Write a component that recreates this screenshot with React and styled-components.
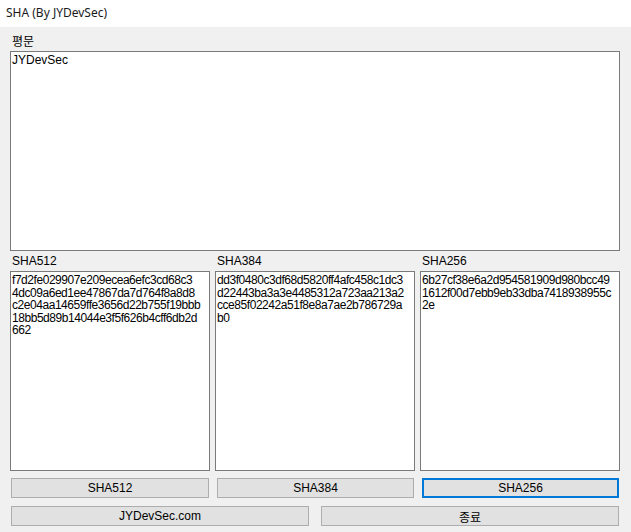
import React from 'react'
import styled, {createGlobalStyle} from 'styled-components'

const GlobalStyle = createGlobalStyle`
  body {
    margin: 0;
    background: #ffffff;
  }
`

const uiFont = `"Liberation Sans", "Noto Sans CJK KR", sans-serif`

const Window = styled.div`
  width: 631px;
  height: 532px;
  display: flex;
  flex-direction: column;
  font-family: ${uiFont};
  font-size: 12px;
  color: #000;
`

const TitleBar = styled.div`
  height: 27px;
  flex: none;
  background: #ffffff;
  display: flex;
  align-items: center;
  padding-left: 6px;
  padding-bottom: 3px;
  box-sizing: border-box;
  font-family: "Noto Sans", "Noto Sans CJK KR", sans-serif;
  font-size: 12px;
  color: #1a1a1a;
`

const Body = styled.div`
  flex: 1;
  background: #f0f0f0;
  padding: 8px 11px 0 10px;
  display: flex;
  flex-direction: column;
`

const Label = styled.div`
  height: ${p => p.$h || 16}px;
  line-height: 14px;
  padding-left: 2px;
  display: flex;
  align-items: ${p => p.$align || 'flex-start'};
`

const TextBox = styled.div`
  height: 200px;
  box-sizing: border-box;
  background: #ffffff;
  border: 1px solid #7a7a7a;
  padding: 2px 1px;
  white-space: pre;
  line-height: 12.5px;
  letter-spacing: ${p => p.$tight ? '-0.45px' : '0'};
  overflow: hidden;
`

const HashGrid = styled.div`
  display: grid;
  grid-template-columns: repeat(3, 200px);
  column-gap: 5px;
`

const HashColumn = styled.div`
  display: flex;
  flex-direction: column;
`

const ButtonRow = styled.div`
  display: grid;
  grid-template-columns: ${p => p.$cols};
  column-gap: ${p => p.$gap}px;
  margin-top: ${p => p.$top}px;
`

const Button = styled.button`
  height: 20px;
  margin: 0 1px 0 ${p => p.$first ? 1 : 2}px;
  box-sizing: border-box;
  background: #e1e1e1;
  border: ${p => p.$focused ? '2px solid #0078d7' : '1px solid #adadad'};
  border-radius: 0;
  font-family: ${uiFont};
  font-size: 12px;
  color: #000;
  padding: 0;
  cursor: default;
`

const hashes = [
  {
    name: 'SHA512',
    lines: [
      'f7d2fe029907e209ecea6efc3cd68c3',
      '4dc09a6ed1ee47867da7d764f8a8d8',
      'c2e04aa14659ffe3656d22b755f19bbb',
      '18bb5d89b14044e3f5f626b4cff6db2d',
      '662'
    ]
  },
  {
    name: 'SHA384',
    lines: [
      'dd3f0480c3df68d5820ff4afc458c1dc3',
      'd22443ba3a3e4485312a723aa213a2',
      'cce85f02242a51f8e8a7ae2b786729a',
      'b0'
    ]
  },
  {
    name: 'SHA256',
    lines: [
      '6b27cf38e6a2d954581909d980bcc49',
      '1612f00d7ebb9eb33dba7418938955c',
      '2e'
    ]
  }
]

export default function App () {
  return (
    <Window>
      <GlobalStyle />
      <TitleBar>SHA (By JYDevSec)</TitleBar>
      <Body>
        <Label>평문</Label>
        <TextBox>JYDevSec</TextBox>
        <HashGrid>
          {hashes.map(h => (
            <HashColumn key={h.name}>
              <Label $h={20} $align='center'>{h.name}</Label>
              <TextBox $tight>{h.lines.join('\n')}</TextBox>
            </HashColumn>
          ))}
        </HashGrid>
        <ButtonRow $cols='repeat(3, 200px)' $gap={5} $top={7}>
          <Button $first>SHA512</Button>
          <Button>SHA384</Button>
          <Button $focused>SHA256</Button>
        </ButtonRow>
        <ButtonRow $cols='repeat(2, 300px)' $gap={10} $top={8}>
          <Button $first>JYDevSec.com</Button>
          <Button $first>종료</Button>
        </ButtonRow>
      </Body>
    </Window>
  )
}
